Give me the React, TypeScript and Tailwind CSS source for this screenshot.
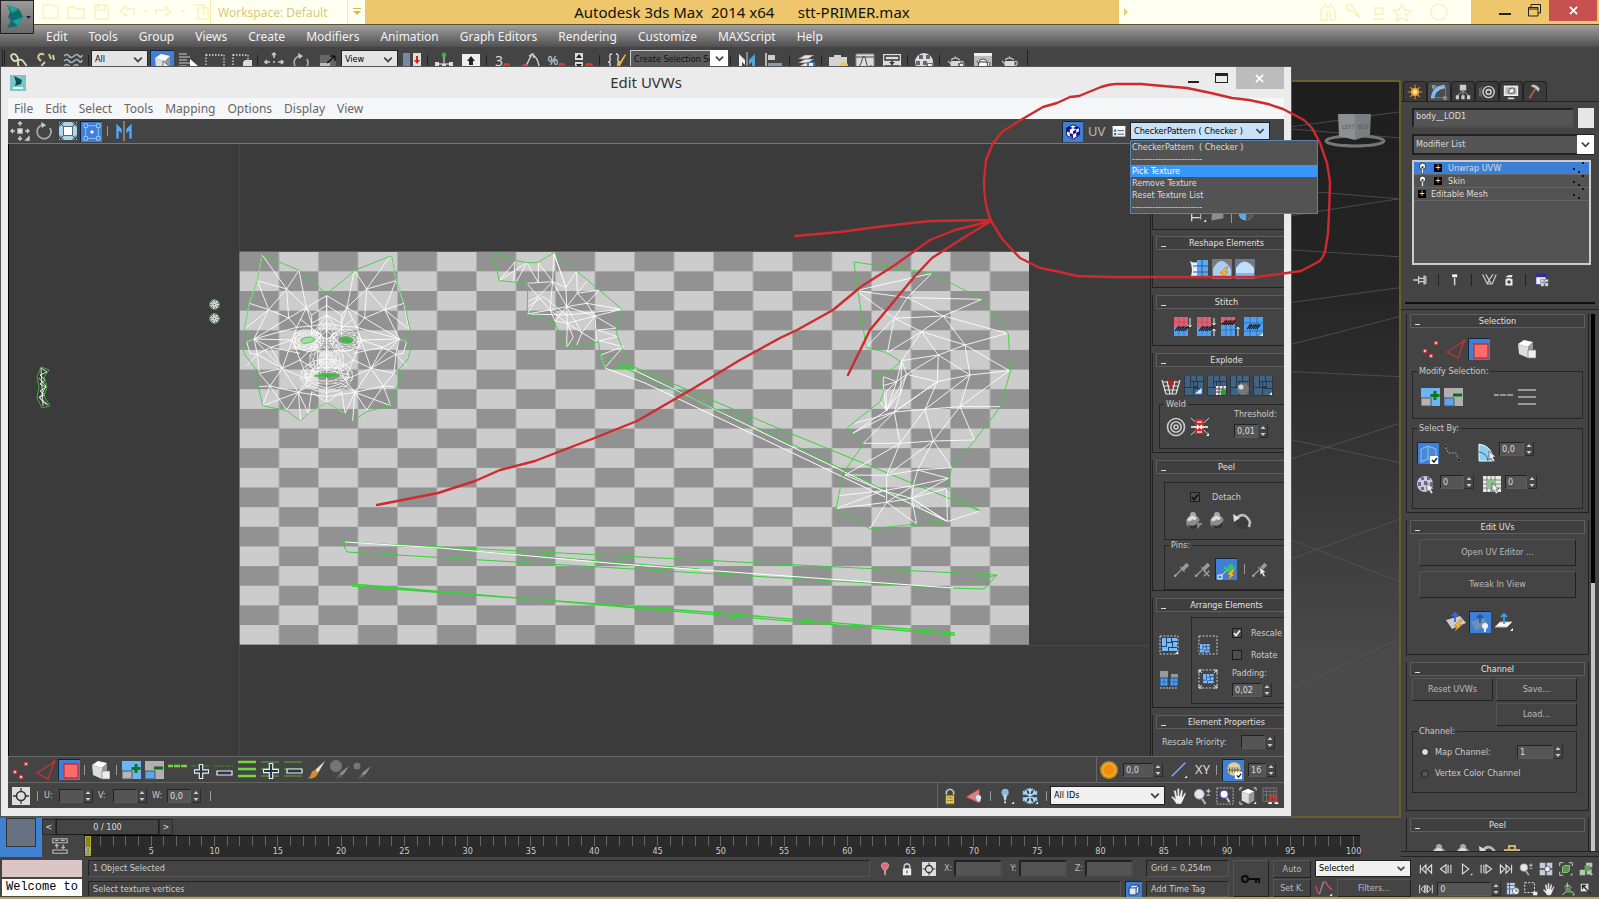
import React from 'react';

const teapot = (
  <g>
    <path d="M5 9h9q2 5-2 8H7q-4-3-2-8z" fill="#d8d8d8" />
    <path d="M5 8q4-4 9 0M9 5h1" stroke="#bbb" fill="none" strokeWidth="1.4" />
    <path d="M5 12L2 9M14 10q4-2 3 2-1 2-3 2" stroke="#bbb" fill="none" strokeWidth="1.3" />
  </g>
);
const tri = <path d="M16 19h3v-3z" fill="#eee" />;
const cursor = <path d="M10 8v9l2-2 2 4 2-1-2-4h3z" fill="#eee" stroke="#333" strokeWidth=".6" />;
const bolt = <path d="M14 8l-6 6h3l-2 5 7-6h-3l3-5z" fill="#ffb92e" stroke="#a06a10" strokeWidth=".5" />;
const maze = (
  <g>
    <path d="M0 0h20v20H0z" fill="#26384a" />
    <path d="M1 0h5v11H1zM7 0h5v5H7zM13 0h6v5h-6zM7 6h2v5H7zM10 6h3v4h-3zM14 6h5v6h-5zM1 12h8v7H1zM10 13h9v6h-9z" fill="#42637f" />
  </g>
);
const blueMaze = (
  <g>
    <path d="M2 3h16v14H2z" fill="#1e4470" />
    <path d="M3 3h4v8H3zM8 3h4v4H8zM13 3h5v3h-5zM8 8h5v4H8zM14 7h4v5h-4zM3 12h6v4H3zM10 13h8v3h-8z" fill="#7dbaf5" />
  </g>
);
const dashBox = <path d="M1 1h18v18H1z" fill="none" stroke="#ccc" strokeDasharray="2 1.5" />;
const pin = <g><path d="M3 17l7-7" stroke="#999" strokeWidth="1.400" /><path d="M8 8l5 5M10 9l5-5 2 2-5 5z" stroke="#999" fill="#999" strokeWidth="1.400" /><circle cx="2.500" cy="17.500" r="1.400" fill="#aaa" /></g>;
const sphere = (
  <g>
    <circle cx="9" cy="11" r="7" fill="#8c8c8c" />
    <circle cx="9" cy="4" r="3" fill="#aaa" />
    <path d="M3 9q4-7 10-2-3 4-4 1-4 4-6 1z" fill="#ddd" />
    <path d="M4 14q7 3 12-5 0 9-7 9-4 0-5-4z" fill="#333" />
  </g>
);
const stitches = <path d="M3 14l3-4h2l-3 4m2 0l3-4h2l-3 4m2 0l3-4h2l-3 4" stroke="#111" fill="none" strokeWidth="1.1" />;
const cubeShape = (
  <g>
    <path d="M2 5l6-4 9 2-5 5z" fill="#fff" />
    <path d="M2 5l10 3v11L3 15z" fill="#ddd" />
    <path d="M12 8l5-5v10l-5 6z" fill="#999" />
  </g>
);

const icons: Record<string, React.ReactNode> = {
  link: <path d="M2 4a3 3 0 015-1l2 3a3 3 0 01-4 3L3 7zM9 9a3 3 0 015 0l3 4a3 3 0 01-5 4l-3-4z" fill="none" stroke="#e3d9b5" strokeWidth="1.8" />,
  unlink: <path d="M8 3a3 3 0 00-5 4l2 2M9 10l-3 3a3 3 0 004 4l4-2M13 2l2 5m2-4l1 5" fill="none" stroke="#d6cc98" strokeWidth="2" />,
  waves: <g fill="none" stroke="#aab4ba" strokeWidth="1.6"><path d="M1 4q3-3 5 0t5 0 5 0 3-1M1 9q3-3 5 0t5 0 5 0 3-1M1 14q3-3 5 0t5 0 4 0" /><path d="M14 15l4 3" stroke="#d6b860" /></g>,
  selectObj: <g>{cubeShape}{cursor}</g>,
  byName: <g><path d="M1 2h8M1 5h11M1 8h8M1 11h11M1 14h8M1 17h10" stroke="#ccc" strokeWidth="1.2" /><path d="M12 7v10l2-2 2 4 1-5h3z" fill="#fff" /></g>,
  rect: <path d="M1 3h18v14H1z" fill="none" stroke="#ddd" strokeDasharray="1.5 1.5" strokeWidth="1.3" />,
  windowSel: <g><path d="M1 3h15v14H1z" fill="none" stroke="#ddd" strokeDasharray="1.5 1.5" strokeWidth="1.3" /><path d="M11 10l2-2h7v8l-2 2h-7z" fill="#ddd" /></g>,
  move: <g fill="none" stroke="#ccc" strokeWidth="1.4"><path d="M10 1v4M8 3l2-2 2 2M10 15v4M8 17l2 2 2-2M1 10h4M3 8l-2 2 2 2M15 10h4M17 8l2 2-2 2" /><path d="M8 8h4v4H8z" fill="#eee" />{tri}</g>,
  moveBig: <g fill="none" stroke="#c8c8c8" strokeWidth="1.6"><path d="M10 1v5M8 3l2-2 2 2M10 14v5M1 10h5M3 8l-2 2 2 2M14 10h5M17 8l2 2-2 2M9 10h2" /></g>,
  rotate: <g fill="none" stroke="#aaa" strokeWidth="1.7"><path d="M8 4a7 7 0 108 3" /><path d="M7 1l5 3-4 3" fill="#ccc" stroke="none" /></g>,
  scaleBig: <g><path d="M2 3h16v15H2z" fill="#666" /><path d="M2 11h10v8H2z" fill="#bbb" /><path d="M9 11l8-7M17 9V4h-5" stroke="#111" strokeWidth="1.4" fill="none" /></g>,
  scaleLight: <g><path d="M0 0h20v20H0z" fill="#a9d7ee" /><path d="M5 5h10v10H5z" fill="#fff" stroke="#555" /><path d="M1 5V1h4M1 1l4 4M15 1h4v4M19 1l-4 4M1 15v4h4M1 19l4-4M19 15v4h-4M19 19l-4-4" stroke="#222" fill="none" strokeWidth="1.1" /></g>,
  freeform: <g><path d="M3 3h14v14H3z" fill="none" stroke="#9cc6ff" /><path d="M1 1h4v4H1zM15 1h4v4h-4zM1 15h4v4H1zM15 15h4v4h-4z" fill="#3f7fd6" stroke="#9cc6ff" /><path d="M10 8v4M8 10h4" stroke="#fff" strokeWidth="1.500" /></g>,
  mirror: <g><path d="M2 2l6 6v5l-3-3v8H2z" fill="#5aa8ec" stroke="#1a4a80" strokeWidth=".6" /><path d="M18 2l-6 6v5l3-3v8h3z" fill="#5aa8ec" stroke="#1a4a80" strokeWidth=".6" /><path d="M10 0v20" stroke="#c9b59a" /></g>,
  mirrorBig: <g><path d="M2 2l6 6v5l-3-3v8H2z" fill="#eee" /><path d="M18 2l-6 6v5l3-3v8h3z" fill="#4aa8e0" /><path d="M10 0v20" stroke="#ccc" /></g>,
  pivot: <g><path d="M1 1h7v18H1z" fill="#7788a0" /><path d="M11 1h8v18h-8z" fill="#ddd" /><path d="M14 4h2v4h2l-3 4-3-4h2z" fill="#c22" /></g>,
  manip: <g><circle cx="10" cy="3" r="2.4" fill="#3fae4a" /><path d="M10 5v9M4 12h12" stroke="#bbb" strokeWidth="1.4" /><path d="M1 10h4v4H1zM15 10h4v4h-4zM8 12h4v4H8z" fill="#ddd" /></g>,
  keyboard: <g><path d="M1 2h18v14H1z" fill="#eee" /><path d="M10 4l4 5h-2v4H8V9H6z" fill="#222" /></g>,
  snapAngle: <g fill="none" strokeWidth="1.5"><path d="M4 18L12 2q6 4 7 12M9 4l4-2 1 4" stroke="#ccc" /><circle cx="5" cy="16" r="3" stroke="#e23b3b" strokeWidth="2" /></g>,
  spinSnap: <g><path d="M1 1h8v7H1zM1 10h8v7H1z" fill="#ddd" /><path d="M5 2l3 4H2zM5 16l3-4H2z" fill="#222" /><circle cx="15" cy="15" r="3" fill="none" stroke="#e23b3b" strokeWidth="2" /></g>,
  sets: <g><path d="M6 2q-3 0-2 4t-2 4q3 0 2 4t2 4M10 2q3 0 2 4t2 4q-3 0-2 4t-2 4" fill="none" stroke="#ddd" strokeWidth="1.3" /><path d="M19 2l-7 11-1 3 3-2 6-11z" fill="#f0b429" /></g>,
  align: <g><path d="M2 1v18" stroke="#ddd" strokeWidth="1.5" /><path d="M4 3h7v5H4z" fill="#ccc" /><path d="M4 11h14v5H4z" fill="#89a" /></g>,
  layers: <g><path d="M2 7l7-4h9l-6 4zM2 11l7-4h9l-6 4zM2 15l7-4h9l-6 4z" fill="#e4e4e4" stroke="#555" strokeWidth=".5" /><path d="M11 10h8v9h-8z" fill="#4a77a8" /><path d="M13 11h4v4h-4z" fill="#eee" /></g>,
  ribbon: <g><path d="M1 5h5V3h7v2h6v11H1z" fill="#d4d4d4" /><circle cx="16" cy="14" r="4" fill="#f4c65c" /></g>,
  curveEd: <g><path d="M1 2h18v16H1z" fill="#ddd" stroke="#888" /><path d="M1 16q4 0 6-8t4 1 3 6 4 0M1 5h18" fill="none" stroke="#444" /></g>,
  schematic: <g><path d="M1 2h18v16H1z" fill="#ddd" /><path d="M3 4h14v4H3zM3 14h14v4H3zM10 8v5" fill="none" stroke="#333" strokeWidth="1.4" /><path d="M7 10h6l-3 3z" fill="#333" /></g>,
  material: <g><circle cx="10" cy="10" r="9" fill="#ddd" /><path d="M5 3h4v4H5zM12 3h4v4h-4zM2 9h4v4H2zM9 9h4v4H9z" fill="#667" /><path d="M12 11h8v8h-8z" fill="#4a77a8" /><path d="M14 12h4v4h-4z" fill="#eee" /></g>,
  renderSetup: <g>{teapot}<path d="M12 11h7v8h-7z" fill="#4a77a8" /><path d="M14 12h3v4h-3z" fill="#eee" /></g>,
  renderFrame: <g><path d="M1 1h18v17H1z" fill="#bbb" /><path d="M1 1h18v3H1z" fill="#eee" /><path d="M6 10h8q2 4-2 7H8q-4-3-2-7zM6 9q4-4 8 0M4 9l2 3M14 11q3-2 3 1l-2 3" fill="#fff" stroke="#444" /></g>,
  render: teapot,
  checker: <g><path d="M2 5l8-4 8 4v9l-8 5-8-5z" fill="#fff" /><path d="M2 5l4-2 4 2-4 2zM10 5l4-2 4 2-4 2zM2 5v4l4 2V7zM6 11v4l4 3v-5zM10 9l4-2v4l-4 2zM14 11l4-2v4l-4 3z" fill="#14149a" /><path d="M2 5l8-4 8 4v9l-8 5-8-5z" fill="none" stroke="#0c0c60" strokeWidth="1.200" /></g>,
  list: <g><path d="M1 3h18v15H1z" fill="#f1f5f8" /><path d="M1 3h18v3H1z" fill="#fff" /><path d="M3 8h3v3H3zM3 13h3v3H3z" fill="#2d6fb0" /><path d="M8 9.500h9M8 14.500h9" stroke="#556" strokeWidth="1.4" /></g>,
  verts: <g fill="#fff" stroke="#e23b3b" strokeWidth="1.4"><circle cx="3" cy="12" r="1.600" /><circle cx="9" cy="17" r="1.600" /><circle cx="14" cy="4" r="1.600" /></g>,
  edges: <g fill="none" stroke="#c23434" strokeWidth="1.3"><path d="M1 13L18 2 12 19z" /><circle cx="18" cy="2" r="1" /></g>,
  face: <path d="M4 4h14v14H4z" fill="#ff6a6a" stroke="#c73030" strokeWidth="1.3" />,
  element: <g>{cubeShape}<path d="M12 11h8v8h-8z" fill="#eee" stroke="#777" strokeWidth=".7" /></g>,
  grow: <g><path d="M0 1h19v18H0z" fill="#6db4f4" /><path d="M0 11h10v8H0z" fill="#b5b5b5" stroke="#555" /><path d="M14 4v9M9.500 8.500h9" stroke="#0c7a1c" strokeWidth="3" /></g>,
  shrink: <g><path d="M0 1h19v18H0z" fill="#b0b0b0" /><path d="M0 11h10v8H0z" fill="#58a6f0" stroke="#555" /><path d="M9 8h9" stroke="#0c6a1c" strokeWidth="3" /></g>,
  loopG: <path d="M0 6h5m1 0h6m1 0h6" stroke="#6fd93f" strokeWidth="2.4" />,
  loopPlus: <g><path d="M0 6h19" stroke="#43653a" strokeWidth="2" strokeDasharray="5 1" /><path d="M10 4v15M3 11.500h15" stroke="#eee" strokeWidth="4.500" /><path d="M10 5v13M4 11.500h13" stroke="#26374c" strokeWidth="2.200" /></g>,
  loopMinus: <g><path d="M0 6h19" stroke="#43653a" strokeWidth="2" strokeDasharray="5 1" /><path d="M3 11h15v4H3z" fill="#26374c" stroke="#eee" strokeWidth="1.200" /></g>,
  ringG: <path d="M1 2h18M1 9h18M1 16h18" stroke="#6fd93f" strokeWidth="2.600" />,
  ringPlus: <g><path d="M1 2h18M1 9h18M1 16h18" stroke="#4b7a3c" strokeWidth="2" /><path d="M11 3v16M3 11h16" stroke="#eee" strokeWidth="4.500" /><path d="M11 4v14M4 11h14" stroke="#26374c" strokeWidth="2.200" /></g>,
  ringMinus: <g><path d="M1 2h18M1 9h18M1 16h18" stroke="#4b7a3c" strokeWidth="2" /><path d="M4 9h15v4H4z" fill="#26374c" stroke="#eee" strokeWidth="1.200" /></g>,
  loopGray: <path d="M0 8h5m1 0h6m1 0h6" stroke="#999" strokeWidth="2" />,
  ringGray: <path d="M1 3h18M1 10h18M1 17h18" stroke="#999" strokeWidth="2.200" />,
  brush: <g><path d="M19 1L9 10l3 3z" fill="#e6dcc8" /><path d="M10 10q-4 0-5 4t-4 4q9 2 11-5z" fill="#d98a2b" /></g>,
  brushPlus: <g><circle cx="7" cy="6" r="6" fill="#757575" /><path d="M20 6l-8 6-4 6 7-4z" fill="#8c8c8c" /><path d="M10 14l-3 5 7-3" fill="#606060" /></g>,
  brushMinus: <g><circle cx="5" cy="6" r="3.500" fill="#757575" /><path d="M19 6l-8 6-4 6 7-4z" fill="#8c8c8c" /><path d="M9 14l-3 5 7-3" fill="#606060" /></g>,
  soft: <g><circle cx="10" cy="10" r="9" fill="#b98a35" /><circle cx="10" cy="10" r="7.500" fill="#efa51f" /><circle cx="10" cy="10" r="5" fill="#f58a09" /></g>,
  line: <g><path d="M2 17L17 2" stroke="#7fa8ef" strokeWidth="1.800" />{tri}</g>,
  limit: <g><circle cx="10" cy="9" r="7.500" fill="#e2cf95" /><path d="M2 10h16M5 7v6M8 7v6M11 7v6M14 7v6" stroke="#555" /><path d="M11 12h8v8h-8z" fill="#fff" /><path d="M13 16l2 2 3-4" fill="none" stroke="#222" strokeWidth="1.400" /></g>,
  absolute: <g><path d="M0 0h20v20H0z" fill="#ddd" /><path d="M10 1v18M1 10h18" stroke="#333" strokeWidth="1.400" /><circle cx="10" cy="10" r="5" fill="#ddd" stroke="#333" strokeWidth="1.800" /></g>,
  lock: <g><path d="M6 9V5q4-5 8 0v4" fill="none" stroke="#c9c9b8" strokeWidth="1.800" /><path d="M5 9h10v10H5z" fill="#d8c65c" stroke="#5e5520" /><path d="M7 12h6M7 15h6" stroke="#8f7f30" /></g>,
  filter: <g><path d="M1 11L16 2v16z" fill="#d98080" stroke="#a04040" /><path d="M12 12q0-3 3-3t3 3l-1 4h-3z" fill="#cfeaf5" /></g>,
  bulb: <g><circle cx="9" cy="6" r="4" fill="#8fb7dd" /><path d="M7 9h4l-1 6H8z" fill="#c3d6e6" /><path d="M8 17h2" stroke="#eee" strokeWidth="2" />{tri}</g>,
  snow: <g><path d="M10 1v18M2 5l16 10M2 15L18 5M7 2l3 3 3-3M7 18l3-3 3 3M2 8l4-1-1-4M18 12l-4 1 1 4M2 12l4 1-1 4M18 8l-4-1 1-4" stroke="#a4dcff" strokeWidth="1.800" fill="none" />{tri}</g>,
  hand: <path d="M7 19q-2-4-6-8 2-2 5 2L4 4q2-1 3 1l1 5V2q2-1 2.500 0V10l2-7q2 0 2 1l-1 7 3-5q2 0 1 2l-3 7-2 4z" fill="#eee" stroke="#444" strokeWidth=".5" />,
  zoom: <g><circle cx="7" cy="8" r="5.500" fill="#dfeaf0" stroke="#999" /><path d="M10 13l4 6" stroke="#b9a985" strokeWidth="2.600" /><path d="M17 2v5M14.500 4.500h5M15 9h4" stroke="#eee" /></g>,
  zoomRegion: <g>{dashBox}<circle cx="9" cy="8" r="4.500" fill="#fff" stroke="#5b4bb5" strokeWidth="1.400" /><path d="M12 12l3 5" stroke="#ccc" strokeWidth="2.200" /></g>,
  zoomExt: <g><path d="M3 5l7-3 7 3-6 3z" fill="#fff" /><path d="M3 5l8 3v11l-8-4z" fill="#ddd" /><path d="M11 8l6-3v10l-6 4z" fill="#999" /><path d="M1 4V1h3M16 1h3v3M1 16v3h3" fill="none" stroke="#eee" />{tri}</g>,
  magnet: <g><path d="M1 1h15v15H1zM1 5h15M1 9h15M5 1v15M9 1v15M13 1v15" stroke="#777" fill="none" /><path d="M9 17v-4q3-6 7 0v4" stroke="#d93030" strokeWidth="3" fill="none" /><path d="M7 18h4M14 18h4" stroke="#fff" strokeWidth="2" /></g>,
  straighten: <g><path d="M1 2q5 3 9 0v17q-4-3-9 0 4-8 0-17z" fill="#e6eff5" /><path d="M8 1h11v18H8z" fill="#5fa8f0" /><path d="M4 7h15M4 13h15M13 1v18" stroke="#2260a0" /></g>,
  relaxBolt: <g><path d="M0 0h20v20H0z" fill="#7a7a7a" /><path d="M1 19V10q8-16 18 0v9z" fill="#a9cdf0" />{bolt}</g>,
  relax: <g><path d="M0 0h20v20H0z" fill="#6d7a88" /><path d="M1 19V9q8-13 18 0v10z" fill="#bfe0fa" /><path d="M1 14h18v5H1z" fill="#7db8f0" /></g>,
  stitchA: <g><path d="M2 0h14v10H2z" fill="#e06070" /><path d="M2 10h14v9H2z" fill="#4f9fee" /><path d="M2 5h14M7 0v19M12 0v19" stroke="#9a4a58" strokeWidth=".6" />{stitches}<path d="M18 1v9M16.500 8l1.500 2 1.500-2" stroke="#eee" fill="none" /></g>,
  stitchB: <g><path d="M1 0h14v10H1z" fill="#e06070" /><path d="M1 10h14v9H1z" fill="#4f9fee" /><path d="M1 5h14M6 0v19M11 0v19" stroke="#7a5a78" strokeWidth=".6" />{stitches}<path d="M18 1v7m0 4v7M16.500 6l1.500 2 1.500-2M16.500 14l1.500-2 1.500 2" stroke="#eee" fill="none" /></g>,
  stitchC: <g><path d="M1 0h14v6H1z" fill="#e06070" /><path d="M1 7h14v12H1z" fill="#4f9fee" /><path d="M1 13h14M6 0v19M11 0v19" stroke="#2a5f9a" strokeWidth=".6" /><g transform="translate(-1 -6)">{stitches}</g><path d="M18 10v9M16.500 12l1.500-2 1.500 2" stroke="#eee" fill="none" /></g>,
  stitchD: <g><path d="M0 0h19v19H0z" fill="#4f9fee" /><path d="M0 6h19M0 14h19M6 0v19M13 0v19" stroke="#2a5f9a" strokeWidth=".7" /><g transform="translate(0 -2)">{stitches}</g>{tri}</g>,
  breakI: <g fill="none" stroke="#ddd"><path d="M1 6h7M12 6h7M2 10h7M11 10h7M3 14h14M5 18h10M1 4l4 14M19 4l-4 14M6 5l3 13M14 5l-3 13" strokeWidth="1.200" /><path d="M6 3l4 10 4-10-4 2z" fill="#b02020" stroke="none" /></g>,
  flatA: <g>{maze}<path d="M10 18l8-7v7z" fill="#e8f2ff" stroke="#3070c0" /></g>,
  flatB: <g>{maze}<path d="M9 10h10v9H9z" fill="#eee" /><path d="M9 13h10M9 16h10M12 10v9M16 10v9" stroke="#444" /><path d="M14 14h5v5h-5z" fill="#2f9a3a" /></g>,
  flatC: <g>{maze}<circle cx="13" cy="13" r="6" fill="#777" /><circle cx="11" cy="11" r="2.500" fill="#ddd" /></g>,
  flatD: <g>{maze}{tri}</g>,
  target: <g fill="none" stroke="#ccc" strokeWidth="1.600"><circle cx="10" cy="10" r="8.500" /><circle cx="10" cy="10" r="5.200" /><circle cx="10" cy="10" r="2" /></g>,
  weld: <g><path d="M1 1l18 17M19 1L1 18" stroke="#ccc" /><path d="M5 2h9v15H5z" fill="#c92a2a" /><path d="M1 10h7M18 10h-7M7 8l2 2-2 2M12 8l-2 2 2 2" stroke="#fff" fill="none" strokeWidth="1.400" /><path d="M7 4h5v2H7zM7 14h5v2H7z" fill="#eaa" />{tri}</g>,
  peel: <g>{sphere}<path d="M13 12h6l-6 6z" fill="#888" /></g>,
  peelMode: sphere,
  reset: <g><circle cx="11" cy="11" r="7.500" fill="#3b3b3b" /><path d="M4 8q8-9 14 3l-1 5" fill="none" stroke="#bbb" strokeWidth="2.600" /><path d="M1 3l1 8 6-4z" fill="#ddd" /></g>,
  pin,
  unpin: <g>{pin}<path d="M11 12l6 6M17 12l-6 6" stroke="#999" strokeWidth="1.800" /></g>,
  autoPin: <g><path d="M4 16l6-6" stroke="#ddd" /><path d="M7 7l6 6M10 9l4-4 3 3-4 4z" stroke="#3fc06a" fill="#3fc06a" strokeWidth="2" /><path d="M1 15h4v4H1z" fill="none" stroke="#fff" /><g transform="translate(2 1)">{bolt}</g></g>,
  pinSel: <g>{pin}{cursor}</g>,
  packA: <g>{dashBox}{blueMaze}{tri}</g>,
  packB: <g><path d="M1 2h8v7H1zM12 5h7v4h-7z" fill="#999" /><path d="M1 9h8v8H1zM11 9h8v8h-8z" fill="#4f9fee" stroke="#1e4a80" /><path d="M1 13h8M11 13h8M5 9v8M15 9v8" stroke="#2f6db0" /><path d="M1 19h18" stroke="#ccc" strokeDasharray="2 1" /></g>,
  packC: <g>{dashBox}<g transform="translate(0 7) scale(.65)">{blueMaze}</g></g>,
  packD: <g>{dashBox}<g transform="translate(3 3) scale(.7)">{blueMaze}</g><path d="M1 4V1h3M19 4V1h-3M1 16v3h3M19 16v3h-3M1 1l3 3M19 1l-3 3M1 19l3-3M19 19l-3-3" stroke="#ddd" fill="none" /></g>,
  relaxH: <g><path d="M3 2v16M3 7h14M3 14h9" stroke="#ddd" strokeWidth="1.400" /><path d="M13 10v6M6 5L3 7l3 2M14 5l3 2-3 2" stroke="#ddd" fill="none" /><path d="M2 1h3v3H2z" fill="#d05050" />{tri}</g>,
  flip: <path d="M4 4l14-2v12L3 17z" fill="#8e8e8e" />,
  half: <g><circle cx="10" cy="9" r="8" fill="#fff" /><path d="M10 1a8 8 0 000 16z" fill="#5aa8ec" /><path d="M10 9l8 0a8 8 0 01-8 8z" fill="#555" /></g>,
  sun: <g><path d="M10 1v18M1 10h18M4 4l12 12M16 4L4 16" stroke="#e8912a" strokeWidth="1.300" /><circle cx="10" cy="10" r="5" fill="#f7a838" /><circle cx="10" cy="10" r="2.500" fill="#ffe9b0" /></g>,
  modify: <g><path d="M2 18Q3 5 17 3" fill="none" stroke="#7ec4ff" strokeWidth="4.500" /><path d="M2 2h3v3H2zM16 16h3v3h-3z" fill="none" stroke="#ccc" /><path d="M3 5v12h13M6 3h12v12" fill="none" stroke="#999" strokeWidth=".8" /></g>,
  hierarchy: <g fill="#ccc"><path d="M6 1h8v7H6zM1 14h4v5H1zM8 14h4v5H8zM15 14h4v5h-4z" /><path d="M10 8v6M3 14l7-5 7 5" stroke="#aaa" fill="none" /></g>,
  motion: <g fill="none" stroke="#ccc"><circle cx="12" cy="10" r="7" strokeWidth="1.800" /><circle cx="12" cy="10" r="3" strokeWidth="2" /><path d="M4 3q-4 7 0 14M1 5q-2 5 0 10" strokeWidth="1" stroke="#888" /></g>,
  display: <g><path d="M1 2h18v13H1z" fill="#eee" /><path d="M3 4h14v9H3z" fill="#bbb" /><path d="M8 6l4-1 2 1v5l-5 1-2-1z" fill="#eee" stroke="#333" /><path d="M6 17h8v2H6z" fill="#ddd" /></g>,
  hammer: <g><path d="M11 5L3 18" stroke="#9c5d4d" strokeWidth="2.600" /><path d="M6 1q6-1 10 5l-2 4q-3-6-9-7z" fill="#c4c4c4" /></g>,
  pushpin: <path d="M0 10h7M7 5v10M7 8h7v4H7M14 4v12M16 5v10" stroke="#ccc" fill="none" strokeWidth="1.600" />,
  tube: <g><path d="M6 2h7v4H6z" fill="#fff" /><path d="M8 6h3v12H8z" fill="#ddd" stroke="#111" strokeWidth=".6" /></g>,
  unique: <path d="M2 3l6 12 6 0 5-12M6 3l4 7 5-7M8 15l2-5 3 5" fill="none" stroke="#ccc" strokeWidth="1.500" />,
  trash: <g><path d="M5 9q5-3 10 0v9H5z" fill="#eee" /><path d="M5 6q3-4 10-3l-1 3z" fill="#eee" /><circle cx="10" cy="13" r="2.500" fill="#444" /></g>,
  config: <g><path d="M1 2h15v15H1z" fill="#f2f2f2" stroke="#2c2c9c" strokeWidth="1.600" /><path d="M1 2h15v4H1z" fill="#2c2c9c" /><path d="M8 9h5v4H8zM14 14h5v5h-5zM8 14h5v5H8zM14 9h5v4h-5z" fill="#ddd" stroke="#444" strokeWidth=".6" /></g>,
  ignore: <g><path d="M2 5l7-3v13l-7 3zM9 2l8 3v12l-8-2" fill="#4a8ad0" stroke="#8fc0f4" /><path d="M11 12h8v8h-8z" fill="#fff" /><path d="M13 16l2 2 3-4" fill="none" stroke="#222" strokeWidth="1.500" /></g>,
  pointEdge: <g fill="none"><path d="M3 4l3 6h8l3 6" stroke="#888" strokeWidth="1.600" strokeDasharray="2 1.500" /><path d="M1 1h3v3H1zM16 16h3v3h-3z" fill="#111" stroke="#999" strokeWidth=".5" /></g>,
  angle: <g><path d="M2 1q14 2 14 17H2z" fill="#8fcdf0" stroke="#dff" /><path d="M2 9q8 1 9 9" stroke="#35638c" fill="none" /><g transform="translate(2 0)">{cursor}</g></g>,
  matSel: <g><circle cx="8" cy="9" r="8" fill="#c9c9dd" /><path d="M4 2h3v3H4zM10 2h3v3h-3zM7 6h3v4H7zM1 7h3v4H1zM13 7h3v4h-3zM4 12h3v3H4z" fill="#6a6a86" />{cursor}</g>,
  gridSel: <g><path d="M1 1h18v16H1z" fill="#e4ecdc" /><path d="M1 5h18M1 9h18M1 13h18M5 1v16M9 1v16M13 1v16" stroke="#667" strokeWidth=".8" /><path d="M5 5h8v8H5z" fill="#8cc08c" />{cursor}</g>,
  mapBolt: <g><path d="M0 8l14-4 6 7-14 6z" fill="#ccc" /><path d="M9 10V1M6 4l3-3 3 3" stroke="#3b68d8" strokeWidth="1.800" fill="none" />{bolt}</g>,
  mapBulb: <g><path d="M1 9l13-4 4 7-12 5z" fill="#6f90b5" /><path d="M10 10V2M7 5l3-3 3 3" stroke="#2a5596" strokeWidth="1.800" fill="none" /><circle cx="15" cy="13" r="3" fill="#eef" /><path d="M14 15h2v4h-2z" fill="#eef" /></g>,
  mapFlat: <g><path d="M1 15l5-5h12l-5 5z" fill="#fff" stroke="#bbb" /><path d="M10 12V2M7 5l3-3 3 3" stroke="#3fa0dc" strokeWidth="1.800" fill="none" />{tri}</g>,
  goldBox: <g><path d="M2 6h16v12H2z" fill="#c9b26a" /><path d="M7 3h6v4H7z" fill="none" stroke="#c9b26a" strokeWidth="2" /><path d="M9 9h3v4H9z" fill="#444" /></g>,
  probe: <path d="M10 1q6 0 5 5-1 4-4 6l-1 7-1-7Q6 10 5 6q-1-5 5-5z" fill="#e06a78" stroke="#eee" strokeWidth=".7" />,
  lockW: <g><path d="M6 9V5q4-5 8 0v4" fill="none" stroke="#ddd" strokeWidth="1.800" /><path d="M4 9h12v10H4z" fill="#eee" /><path d="M10 12v4" stroke="#444" strokeWidth="1.500" /></g>,
  isoCube: <path d="M3 7l4-4h10v10l-4 4H3zM3 7h10v10M13 7l4-4" fill="#dcebff" stroke="#1c3c68" strokeWidth="1.400" />,
  first: <path d="M2 4v12M10 4l-6 6 6 6zM18 4l-6 6 6 6z" fill="none" stroke="#ddd" strokeWidth="1.600" />,
  prev: <path d="M10 4l-8 6 8 6zM13 4v12M17 4v12" fill="none" stroke="#ddd" strokeWidth="1.600" />,
  play: <g><path d="M5 3l9 7-9 7z" fill="none" stroke="#ddd" strokeWidth="1.600" />{tri}</g>,
  next: <path d="M10 4l8 6-8 6zM7 4v12M3 4v12" fill="none" stroke="#ddd" strokeWidth="1.600" />,
  last: <path d="M18 4v12M10 4l6 6-6 6zM2 4l6 6-6 6z" fill="none" stroke="#ddd" strokeWidth="1.600" />,
  keyMode: <path d="M1 4v12M8 5l-5 5 5 5zM10 4v12M12 5l5 5-5 5zM19 4v12" fill="none" stroke="#ddd" strokeWidth="1.400" />,
  zoomAll: <g><path d="M1 1h8v8H1zM11 1h8v8h-8zM1 11h8v8H1zM11 11h8v8h-8z" fill="#c7cdd4" /><circle cx="12" cy="10" r="4" fill="#eef" stroke="#345" /></g>,
  extents: <g><path d="M1 6V1h5M14 1h5v5M1 14v5h5" stroke="#ccc" fill="none" strokeWidth="1.400" /><path d="M5 7l3-2h7v7l-3 3H5z" fill="#4d9a4a" stroke="#b8e0a8" />{tri}</g>,
  extentsAll: <g><path d="M10 1h9v7h-9zM1 11h8v8H1zM11 10h7v8h-7z" fill="#bbc4bb" /><path d="M8 5h8v8H8z" fill="#5aa850" />{tri}</g>,
  timeCfg: <g><path d="M1 1h12v17H1z" fill="#cfe0f2" stroke="#446" /><path d="M1 5h12M5 1v17M1 10h12" stroke="#3b6ea8" strokeWidth="1.600" /><circle cx="14" cy="13" r="5" fill="#eee" stroke="#444" /><path d="M14 10v3h3" stroke="#333" fill="none" /></g>,
  region: <g><path d="M1 1h14v14H1z" fill="none" stroke="#ddd" strokeDasharray="3 2" strokeWidth="1.400" /><path d="M13 14h6v5h-6z" fill="#eee" /></g>,
  orbit: <g><path d="M9 1v12l-7 5M9 13l9 2M5 7q5-5 10 1" stroke="#ccc" fill="none" strokeWidth="1.400" /><circle cx="10" cy="11" r="4" fill="#55a04a" />{tri}</g>,
  maximize: <g><path d="M2 2h12v12H2z" fill="#ddd" stroke="#444" /><path d="M5 5l12 12M5 10V5h5" stroke="#222" fill="none" strokeWidth="1.800" /></g>,
  key: <g><circle cx="4" cy="10" r="3" fill="none" stroke="#0a0a0a" strokeWidth="2" /><path d="M7 10h12M15 10v4M18 10v4" stroke="#0a0a0a" strokeWidth="2" fill="none" /></g>,
  tangent: <g><path d="M1 8q3 14 6 3T12 4t7 8" fill="none" stroke="#d05050" strokeWidth="1.500" /><path d="M5 17l4-14" stroke="#7a90c8" />{tri}</g>,
  trackToggle: <path d="M1 1h18v5H1zM1 15h18v4H1zM4 3h4m3 0h5M6 8v5M4 10l2-2 2 2M14 8v5M12 11l2 2 2-2" fill="none" stroke="#bbb" strokeWidth="1.400" />,
};

const sizes = { 14: 'size-[14px]', 16: 'size-4', 18: 'size-[18px]', 20: 'size-5' };

function Ic({ n, s = 20 }: { n: string; s?: keyof typeof sizes }) {
  return <svg viewBox="0 0 20 20" className={`${sizes[s]} shrink-0`} aria-hidden="true">{icons[n]}</svg>;
}

function Tool({ n, s = 20, on, className = '' }: { n: string; s?: keyof typeof sizes; on?: boolean; className?: string }) {
  return (
    <button
      aria-label={n}
      className={`flex items-center justify-center shrink-0 ${on ? 'bg-[#3f7fd6] border-t border-l border-[#15243c]' : ''} ${className || 'w-6 h-[22px]'}`}
    >
      <Ic n={n} s={s} />
    </button>
  );
}

const Sep = ({ className = 'w-2' }: { className?: string }) => (
  <span className={`flex justify-center shrink-0 ${className}`}><span className="w-px h-[10px] bg-[#999]" /></span>
);

const Bar = () => <span className="w-px h-3 mx-[4px] bg-[#222]" />;

function Spin({ label, value = '', w = 'w-6' }: { label: string; value?: string; w?: string }) {
  return (
    <span className="flex items-center shrink-0">
      <input aria-label={label} defaultValue={value} className={`${w} h-[14px] px-[2px] bg-[#555] border border-[#222] border-r-[#5c5c5c] border-b-[#5c5c5c] text-[#ddd]`} />
      <svg viewBox="0 0 10 14" className="w-[10px] h-[14px]" aria-hidden="true">
        <path d="M9.500 0v13.500H1" fill="none" stroke="#2b2b2b" />
        <path d="M5 2l2.500 3h-5zM5 12l2.500-3h-5z" fill="#ccc" />
      </svg>
    </span>
  );
}

function Check({ on, mark = '#eee' }: { on?: boolean; mark?: string }) {
  return (
    <span className="grid shrink-0">
      <input type="checkbox" defaultChecked={on} className="col-start-1 row-start-1 appearance-none size-[10px] border border-[#1c1c1c] bg-[#4e4e4e]" />
      {on && <svg viewBox="0 0 10 10" className="col-start-1 row-start-1 size-[10px] pointer-events-none"><path d="M2 5l2 2.500L8 2.500" fill="none" stroke={mark} strokeWidth="1.800" /></svg>}
    </span>
  );
}

function Select({ label, options, className, h = 'h-[17px]' }: { label: string; options: string[]; className: string; h?: string }) {
  return (
    <span className={`relative flex shrink-0 ${className}`}>
      <select aria-label={label} className={`appearance-none w-full pl-[3px] ${h} bg-transparent outline-none`}>
        {options.map((o) => <option key={o}>{o}</option>)}
      </select>
      <svg viewBox="0 0 18 18" className="absolute right-0 top-0 h-full w-[18px] pointer-events-none" aria-hidden="true">
        <path d="M5 7l4 4 4-4" fill="none" stroke="#444" strokeWidth="2" />
      </svg>
    </span>
  );
}

function Rollout({ title, body, children }: { title: string; body: string; children?: React.ReactNode }) {
  return (
    <section className="pt-[7px] mb-[7px] shrink-0">
      <div className="border border-t-0 border-[#222] px-[3px]">
        <h3 className="relative -mt-[7px] h-[14px] flex items-center justify-center border border-[#5e5e5e] bg-[#3f3f3f] text-[#e2e2e2]">
          <span className="absolute left-1 bottom-[2px] w-[5px] h-px bg-[#ddd]" />
          {title}
        </h3>
        <div className={body}>{children}</div>
      </div>
    </section>
  );
}

function Group({ title, className, children }: { title: string; className: string; children: React.ReactNode }) {
  return (
    <fieldset className={`border border-[#262626] min-w-0 ${className}`}>
      <legend className="ml-1 px-[2px] leading-[10px]">{title}</legend>
      {children}
    </fieldset>
  );
}

const mainMenu = ['Edit', 'Tools', 'Group', 'Views', 'Create', 'Modifiers', 'Animation', 'Graph Editors', 'Rendering', 'Customize', 'MAXScript', 'Help'];
const uvMenu = ['File', 'Edit', 'Select', 'Tools', 'Mapping', 'Options', 'Display', 'View'];
const textures = ['CheckerPattern  ( Checker )', '------------------------', 'Pick Texture', 'Remove Texture', 'Reset Texture List', '------------------------'];

/* ---------- UV mesh drawing ---------- */

function fan(cx: number, cy: number, rx: number, ry: number, k: number, n: number) {
  let d = '';
  for (let i = 0; i < n; i++) {
    const a = (i / n) * Math.PI * 2;
    const b = ((i + 1) / n) * Math.PI * 2;
    const m = (a + b) / 2;
    const p = (t: number, s: number) => `${(cx + Math.cos(t) * rx * s).toFixed(1)} ${(cy + Math.sin(t) * ry * s).toFixed(1)}`;
    d += `M${p(a, 1)}L${p(b, 1)}M${p(a, 1)}L${p(m, k)}L${p(b, 1)}M${p(m, k)}L${p(m + (b - a), k)}`;
  }
  return d;
}

const halfFace =
  'M96 44L170 147 82 122 116 209 170 147 207 91 229 203 170 147 176 234 116 209 58 190M96 44L82 122 58 190 43 268 116 209 72 297 176 234 229 203 290 167V488' +
  'M176 234L200 262 229 203 245 250 290 225M72 297L200 262 187 300 72 297 122 322 187 300M50 305L72 297 82 343 122 322 157 385 82 343 50 378M50 305L60 340 82 343 88 400 157 385 120 438 88 400' +
  'M120 438L98 497M120 438L170 510 205 457 120 438 88 440M157 385L205 457 212 543M205 457L235 520 290 488M205 457L98 497M187 300L157 385 210 360 187 300M157 385L235 420 205 457 290 470' +
  'M200 262L245 258 290 250M210 360L235 420 250 385 210 360 235 335 187 320M205 457L245 430 290 445M235 420L250 405M157 385L72 297M122 322L210 340M235 520L245 455 290 488' +
  'M229 203L245 225 290 196M245 225V285L290 225M212 238L290 300M250 385L290 350 262 330 235 335 262 300 290 330M262 300L290 270M262 330V385L290 365';

function UvCanvas() {
  const faceCentre = fan(233, 300, 25, 13, 1.6, 12) + fan(347, 300, 25, 13, 1.6, 12) + fan(290, 360, 24, 26, 0.6, 10) + fan(290, 360, 40, 40, 1.3, 12)
    + fan(290, 407, 42, 16, 1.6, 14) + fan(290, 407, 66, 42, 1.2, 14) + fan(290, 280, 30, 26, 0.6, 10) + fan(233, 300, 48, 32, 0.8, 10) + fan(347, 300, 48, 32, 0.8, 10);
  return (
    <svg viewBox="9 144 1141 612" className="w-full h-full" fill="none" aria-label="UV layout">
      <defs>
        <pattern id="chk" x="239.500" y="251.700" width="79" height="39.300" patternUnits="userSpaceOnUse">
          <rect width="79" height="39.300" fill="#ccc" />
          <rect width="39.500" height="19.650" fill="#929292" />
          <rect x="39.500" y="19.650" width="39.500" height="19.650" fill="#929292" />
        </pattern>
      </defs>
      <path d="M239.500 144V252M1029 645.500H1150M239.500 645V756" stroke="#484848" />
      <rect x="239.500" y="251.700" width="789.500" height="393" fill="url(#chk)" />

      <g transform="translate(230 240) scale(.3333)" strokeWidth="2.600">
        <g stroke="#fff">
          <path d={halfFace} />
          <path d={halfFace} transform="translate(580) scale(-1 1)" />
          <path d={faceCentre} strokeWidth="1.800" />
          <path d="M808 122L855 65 850 128M890 68L808 122M890 68L925 128V68L968 125 972 40 1008 142 1040 93 1042 160 1072 122M890 68L860 125M890 130L968 125 925 170 890 130M893 185L925 170 960 210 892 222 925 170M968 125L960 210 1010 200 968 125 1008 142 1010 200 1042 160 1108 150M972 40L1008 142M1010 200L1070 190 1042 160M1070 190L1108 150M1070 190L1176 208 1095 228 1010 200 1012 250 960 210 975 243 1012 250 1095 228 1070 190M1012 250L1010 322 1030 292 1012 250 1056 278 1095 228 1100 305 1056 278 1040 315M1095 228L1158 265 1102 270 1163 290 1108 302 1180 320 1112 345 1125 383 1180 320M1176 208L1010 225M892 222L1010 225 940 170 893 200M975 243L1010 200 1056 278" />
        </g>
        <g stroke="#3ad03a">
          <path d="M96 44L207 91 290 162 378 89 485 47 498 120 524 192 540 268 513 298 530 305 542 328 535 355 515 380 495 400 515 405 500 440 480 497 410 515 367 545 345 520 290 488 235 520 212 543 170 512 98 497 85 440 68 410 88 398 70 378 45 345 38 325 50 303 70 297 43 268 58 190 82 122z" />
          <path d="M212 302l12-9 22-2 10 7-14 9-22 4z" fill="#a9d8a9" />
          <path d="M326 292l28-1 16 10-8 9-22-2z" fill="#4fae4f" />
          <path d="M254 408l30-9 34 3 10 5-30 6z" fill="#4fae4f" />
          <path d="M788 38L860 62 890 68 922 68 972 38 1040 93 1108 150 1176 208 1158 265 1163 290 1200 385 1112 345 1105 305 1010 322 985 270 968 243 892 222 893 130 808 122z" />
          <path d="M1112 345L1125 383 1210 386" />
        </g>
      </g>

      <path d="M605 368L645 383 780 447 885 497M634 370L780 441 947 521" stroke="#fff" />
      <path d="M620 366L634 367 780 429 980 511M620 366L780 438 945 521" stroke="#3ad03a" />

      <g transform="translate(780 240) scale(.3333)" strokeWidth="2.600">
        <path
          stroke="#fff"
          d="M228 152L455 100 382 173 228 152 343 235 382 173 605 178 490 228 382 173M343 235L490 228 425 275 343 235 258 322M343 235L322 338 425 275 555 315 490 228 682 280 555 315 688 392 570 405 555 315M425 275L475 345 555 315M425 275L365 362 475 345 380 403 365 362 350 425 380 403 472 425 475 345 570 405 472 425 343 516 380 403 320 512 350 425 310 410V437L350 425 318 455 320 512M310 437L318 512 218 580 343 516 225 550M343 516L472 425 435 508 343 516 360 610 435 508 570 405 540 500 435 508 460 603 360 610 250 610 343 516M540 500L688 392M540 500H662M540 500L583 600 460 603 540 500M460 603L515 683 413 690 460 603 320 706 360 610 195 705 320 706 413 690 505 715 400 737 413 690M320 706V787L400 737 395 775 505 715M175 767L310 752 400 737M168 806L310 752 395 775 500 745 502 845 395 775 410 852 320 787 270 865M168 806L320 787 395 775 502 845 600 813M195 705L310 752 502 845M300 485L320 512M365 362L362 455 320 512"
        />
        <path stroke="#3ad03a" d="M515 685L500 745 600 813M502 845L410 852 270 867 168 806 190 700 250 612 202 563 300 485 312 455 285 398 310 410 362 365 320 338 258 322 222 66 460 100 605 178 685 282 692 390 662 500 585 600 515 685" />
      </g>

      <g stroke="#3ad03a">
        <path d="M342 542L997 575 984 589 950 588M342 542L347 552 952 588M997 575L970 582M400 545L700 569" />
        <path d="M352 584L955 635M352 586L720 613 955 633" strokeWidth="1.300" />
      </g>
      <path d="M345 542L440 548 620 564 953 588" stroke="#fff" />

      <g strokeWidth=".8">
        <path d={fan(214.500, 304.500, 4, 4, 0.3, 7) + fan(214.500, 318.500, 4, 4, 0.3, 7)} stroke="#fff" />
        <circle cx="214.500" cy="304.500" r="5" stroke="#3ad03a" />
        <circle cx="214.500" cy="318.500" r="5" stroke="#3ad03a" />
        <path d="M41 368l6 4-7 3 5 5-5 4 6 3-6 4 5 4-6 2 4 5 5 3M39 378l7 8-6 12 7 6M41 368l2 38" stroke="#fff" />
        <path d="M41 367L49 370 44 377 47 387 44 396 50 406 42 408 37 398 39 387 37 377z" stroke="#3ad03a" />
      </g>
    </svg>
  );
}

function UvPanel() {
  return (
    <aside className="w-[134px] shrink-0 overflow-hidden border-l border-[#1c1c1c] bg-[#444]">
      <div className="w-[150px] pl-[1px] h-full flex flex-col">
        <div className="h-[86px] border-b border-l border-[#222] flex items-end gap-[2px] pl-9 pb-[6px] mb-[6px] shrink-0">
          <Ic n="relaxH" s={18} /><Ic n="flip" s={16} /><Sep /><Ic n="half" s={18} />
        </div>
        <Rollout title="Reshape Elements" body="h-[37px] flex items-center justify-center gap-[3px] pr-[10px]">
          <Ic n="straighten" /><Ic n="relaxBolt" /><Ic n="relax" />
        </Rollout>
        <Rollout title="Stitch" body="h-[36px] flex items-center gap-[4px] pl-4">
          <Ic n="stitchA" /><Ic n="stitchB" /><Ic n="stitchC" /><Ic n="stitchD" />
        </Rollout>
        <Rollout title="Explode" body="h-[85px] pt-[9px]">
          <div className="flex gap-[3px] pl-[5px]">
            <Ic n="breakI" /><Ic n="flatA" /><Ic n="flatB" /><Ic n="flatC" /><Ic n="flatD" />
          </div>
          <Group title="Weld" className="ml-[3px] h-[50px] mt-[3px]">
            <div className="flex items-center gap-1 pl-[6px] h-9">
              <Ic n="target" /><Ic n="weld" />
              <div className="ml-5 self-start">
                <div className="mb-1">Threshold:</div>
                <Spin label="Threshold" value="0,01" />
              </div>
            </div>
          </Group>
        </Rollout>
        <Rollout title="Peel" body="h-[116px] pt-2">
          <div className="ml-2 h-[58px] border border-r-0 border-[#262626] pt-1">
            <label className="flex items-center gap-3 pl-[25px] h-5"><Check on mark="#111" />Detach</label>
            <div className="flex gap-1 pl-[19px] mt-[4px]"><Ic n="peel" /><Ic n="peelMode" /><Ic n="reset" /></div>
          </div>
          <Group title="Pins:" className="ml-2 h-[50px]">
            <div className="flex items-center gap-[3px] pl-[8px] pt-2">
              <Ic n="pin" s={18} /><Ic n="unpin" s={18} /><Tool n="autoPin" on className="w-[22px] h-[22px]" /><Sep /><Ic n="pinSel" s={18} />
            </div>
          </Group>
        </Rollout>
        <Rollout title="Arrange Elements" body="h-[95px] pt-[5px] flex">
          <div className="w-[35px] flex flex-col gap-[14px] pt-[18px] pl-[3px] shrink-0">
            <Ic n="packA" /><Ic n="packB" />
          </div>
          <div className="flex-1 h-[87px] border border-[#262626] flex pt-2 gap-[14px] pl-[6px]">
            <div className="flex flex-col gap-[14px] pt-[9px]"><Ic n="packC" /><Ic n="packD" /></div>
            <div className="flex flex-col">
              <label className="flex items-center gap-[9px] h-[14px]"><Check on />Rescale</label>
              <label className="flex items-center gap-[9px] h-[14px] mt-2"><Check />Rotate</label>
              <span className="mt-[6px] mb-1">Padding:</span>
              <Spin label="Padding" value="0,02" w="w-[30px]" />
            </div>
          </div>
        </Rollout>
        <Rollout title="Element Properties" body="h-[60px] pt-[6px]">
          <div className="flex items-center gap-[14px] pl-[6px]">Rescale Priority:<Spin label="Rescale Priority" /></div>
        </Rollout>
      </div>
    </aside>
  );
}

function UvEditor() {
  return (
    <div className="absolute left-px right-[110px] top-5 bottom-[41px] bg-[#ebebeb] flex flex-col px-[7px] pb-[8px] shadow-[0_0_0_1px_#555] z-10">
      <header className="h-[31px] shrink-0 flex items-start justify-between">
        <svg viewBox="0 0 16 16" className="size-4 ml-[2px] mt-2" aria-hidden="true">
          <rect width="16" height="16" fill="#7fc4c4" /><path d="M4 1l8 4-1 4-6 2 1-4z" fill="#0d4f55" /><path d="M3 12h10v2H3z" fill="#dff" />
        </svg>
        <h2 className="font-['Noto_Sans'] text-[15px] leading-[30px] text-[#333] pl-[86px]">Edit UVWs</h2>
        <div className="flex">
          <button aria-label="Minimize" className="w-7 h-[22px] flex items-end justify-center pb-[6px]"><span className="w-[11px] h-[2px] bg-[#222]" /></button>
          <button aria-label="Maximize" className="w-7 h-[22px] flex items-center justify-center"><span className="w-[13px] h-[10px] border border-t-[3px] border-[#222]" /></button>
          <button aria-label="Close" className="w-[48px] h-[22px] bg-[#bcbcbc] text-white flex items-center justify-center">
            <svg viewBox="0 0 10 10" className="size-[9px]"><path d="M1 1l8 8M9 1L1 9" stroke="#fff" strokeWidth="2" /></svg>
          </button>
        </div>
      </header>

      <nav className="h-[21px] shrink-0 bg-[#f5f6f8] flex items-center gap-3 px-[6px] font-['Noto_Sans'] text-[12px] text-[#666]">
        {uvMenu.map((m) => <button key={m}>{m}</button>)}
      </nav>

      <div className="h-[25px] shrink-0 bg-[#444] border-b border-[#777] flex items-center justify-between">
        <div className="flex items-center">
          <Tool n="move" /><Tool n="rotate" /><Tool n="scaleLight" s={18} /><Tool n="freeform" s={18} on className="w-[22px] h-[21px]" /><Sep className="w-[10px]" /><Tool n="mirror" />
        </div>
        <div className="flex items-center pr-[14px]">
          <Tool n="checker" s={16} on className="w-[21px] h-[21px] mr-[5px]" />
          <button className="font-['Noto_Sans'] text-[13px] text-[#bbb] w-6 text-left">UV</button>
          <Tool n="list" s={14} className="w-[14px] h-5 mr-1" />
          <div className="relative">
            <Select label="Texture" options={['CheckerPattern  ( Checker )']} className="w-[140px] bg-[#c9e2fb] border border-[#222] text-black whitespace-pre" h="h-4" />
            <ul role="listbox" className="absolute top-full left-0 w-[188px] border border-[#5b82ad] bg-[#535353] text-[#ddd] z-20">
              {textures.map((t, i) => (
                <li key={i} role="option" aria-selected={i === 2} className={`h-3 px-[1px] leading-3 whitespace-pre ${i === 2 ? 'bg-[#3797fb] text-white' : ''}`}>{t}</li>
              ))}
            </ul>
          </div>
        </div>
      </div>

      <div className="flex-1 min-h-0 flex bg-[#3b3b3b] border-l border-black">
        <div className="flex-1 min-w-0"><UvCanvas /></div>
        <UvPanel />
      </div>

      <div className="h-[26px] shrink-0 bg-[#444] border-t border-[#666] flex items-center justify-between">
        <div className="flex items-center pl-[2px]">
          <Tool n="verts" /><Tool n="edges" /><Tool n="face" on className="w-[22px] h-[21px]" /><Sep /><Tool n="element" /><Sep />
          {['grow', 'shrink', 'loopG', 'loopPlus', 'loopMinus', 'ringG', 'ringPlus', 'ringMinus', 'brush', 'brushPlus', 'brushMinus'].map((n) => <Tool key={n} n={n} className="w-[23px] h-[22px]" />)}
        </div>
        <div className="flex items-center h-full border-l border-[#666] pr-2">
          <Tool n="soft" /><span className="w-[2px]" />
          <Spin label="Falloff" value="0,0" w="w-[30px]" />
          <Tool n="line" s={18} className="w-8 h-5" />
          <button className="font-['Noto_Sans'] text-[13px] text-[#ddd]">XY</button>
          <Sep className="w-[12px]" />
          <Tool n="limit" s={18} on className="w-[22px] h-[22px] mr-1" />
          <Spin label="Limit" value="16" w="w-[18px]" />
        </div>
      </div>
      <div className="h-[26px] shrink-0 bg-[#444] border-t border-[#666] flex items-center justify-between">
        <div className="flex items-center gap-[3px] pl-1">
          <Ic n="absolute" s={18} /><Sep />
          <span className="w-3">U:</span><Spin label="U" /><span className="w-[14px] pl-[2px]">V:</span><Spin label="V" /><span className="w-[14px] pl-[2px]">W:</span><Spin label="W" value="0,0" /><Sep className="w-3" />
        </div>
        <div className="flex items-center h-full border-l border-[#666]">
          <Tool n="lock" s={18} /><Tool n="filter" s={18} /><Sep /><Tool n="bulb" s={18} /><Tool n="snow" s={18} /><Sep />
          <Select label="Material IDs" options={['All IDs']} className="w-[115px] bg-[#f0f0f0] border border-[#222] text-black mr-[2px]" />
          {['hand', 'zoom', 'zoomRegion', 'zoomExt', 'magnet'].map((n) => <Tool key={n} n={n} s={18} className="w-[23px] h-[22px]" />)}
          <span className="w-[2px]" />
        </div>
      </div>
    </div>
  );
}

function MainToolbar() {
  const T = ({ n, on }: { n: string; on?: boolean }) => <Tool n={n} on={on} className="w-[27px] h-[24px]" />;
  const S = () => <span className="w-px h-5 mx-[2px] bg-[#222] self-center" />;
  return (
    <div className="h-[33px] shrink-0 flex items-start pt-[3px]">
      <div className="flex items-start border-r border-[#222] h-full pl-[2px] pr-[4px]">
        <span className="w-[3px] h-5 border-x border-[#222]" />
        <T n="link" /><T n="unlink" /><T n="waves" /><S />
        <Select label="Selection filter" options={['All']} className="w-[57px] bg-[#e4e4e4] border border-[#222] text-black" />
        <Tool n="selectObj" on className="w-6 h-6 ml-[2px]" /><T n="byName" /><T n="rect" /><T n="windowSel" /><S />
        <T n="moveBig" /><T n="rotate" /><T n="scaleBig" />
        <Select label="Coordinate system" options={['View']} className="w-[57px] bg-[#e4e4e4] border border-[#222] text-black" />
        <T n="pivot" /><S /><T n="manip" /><T n="keyboard" /><S />
        <button className="w-[27px] h-5 flex items-center justify-center font-['Noto_Sans'] text-[14px] text-[#ddd]">3<span className="size-[7px] mt-3 rounded-full border-2 border-[#e23b3b]" /></button>
        <T n="snapAngle" />
        <button className="w-[27px] h-5 flex items-center justify-center font-['Noto_Sans'] text-[13px] text-[#ddd]">%<span className="size-[7px] mt-3 rounded-full border-2 border-[#e23b3b]" /></button>
        <T n="spinSnap" /><S /><T n="sets" />
        <span className="relative flex ml-px">
          <input aria-label="Selection set" defaultValue="Create Selection Se" className="w-[98px] h-[17px] pl-[3px] bg-[#5a5a5a] border border-[#ccc] text-[#111]" />
          <span className="absolute right-0 top-0 h-[17px] w-[18px] bg-white flex items-center justify-center">
            <svg viewBox="0 0 10 10" className="size-[9px]"><path d="M1 3l4 4 4-4" fill="none" stroke="#444" strokeWidth="2" /></svg>
          </span>
        </span>
        <S /><T n="mirrorBig" /><T n="align" /><S /><T n="layers" /><S /><T n="ribbon" /><T n="curveEd" /><T n="schematic" /><S /><T n="material" /><S /><T n="renderSetup" /><T n="renderFrame" /><T n="render" />
      </div>
    </div>
  );
}

function Viewport() {
  return (
    <div className="flex-1 min-h-0 flex justify-end border-t-2 border-r-2 border-b-2 border-[#6a5f2c] bg-[linear-gradient(#1e1e1e,#262626_30%,#4a4a4a_80%)]">
      <svg viewBox="1290 82 109 735" className="w-[109px] h-full" fill="none" aria-label="Perspective viewport">
        <path d="M1290 127L1399 112M1290 129L1399 138M1290 190L1399 199M1290 216L1399 199M1290 250L1399 257M1290 303L1399 288M1290 345L1399 317M1290 372L1399 377M1290 460L1399 424M1290 440L1399 463M1290 560L1399 520M1290 540L1399 582M1290 690L1399 640" stroke="#555" strokeWidth=".8" />
        <ellipse cx="1355" cy="141" rx="29" ry="5" stroke="#777" strokeWidth="3" />
        <path d="M1338 114h17v26l-16-4z" fill="#8c8f94" />
        <path d="M1355 114h16l-1 21-15 5z" fill="#7b7e83" />
        <text x="1342" y="129" fontSize="6" fill="#555">LEFT</text>
        <text x="1358" y="129" fontSize="6" fill="#555">BOT</text>
      </svg>
    </div>
  );
}

function Timeline() {
  return (
    <div className="h-[39px] shrink-0 flex bg-[#444]">
      <div className="w-[42px] bg-[#3f82d4] shrink-0 px-[6px] pb-[10px]"><div className="h-full bg-[#66727f] border border-[#333]" /></div>
      <div className="flex-1 flex flex-col pt-px">
        <div className="h-4 flex items-center text-[#ddd]">
          <button className="w-[14px] h-full border border-[#2a2a2a]">&lt;</button>
          <div className="w-[103px] h-full border border-[#1e1e1e] text-center leading-[14px]">0 / 100</div>
          <button className="w-[14px] h-full border border-[#2a2a2a]">&gt;</button>
        </div>
        <div className="flex-1 flex">
          <button aria-label="Track bar" className="w-[42px] flex items-center justify-center pr-[6px]"><Ic n="trackToggle" s={16} /></button>
          <div className="flex-1 mr-[41px] pl-1 pr-[6px] bg-[#2b2b2b] border-t border-black flex justify-between">
            {Array.from({ length: 101 }, (_, i) => (
              <div key={i} className="w-0 flex flex-col items-center">
                {i === 0
                  ? <span className="w-[6px] h-[20px] bg-[#8b831f] border border-[#b5aa30] shrink-0" />
                  : <span className="w-px h-[10px] bg-[#666] shrink-0" />}
                {i % 5 === 0 && <span className={`text-[#ccc] leading-[11px] ${i === 0 ? '-mt-[10px]' : ''}`}>{i}</span>}
              </div>
            ))}
          </div>
        </div>
      </div>
    </div>
  );
}

function CommandPanel() {
  const tabs = ['sun', 'modify', 'hierarchy', 'motion', 'display', 'hammer'];
  const mods = ['Unwrap UVW', 'Skin', 'Editable Mesh'];
  const btn = 'border border-[#555] border-r-[#222] border-b-[#222] text-[#bbb]';
  return (
    <aside className="w-[198px] shrink-0 flex flex-col pt-[34px] bg-[#444]">
      <div className="flex pl-[2px] border-b border-[#222] shrink-0">
        {tabs.map((t) => <Tool key={t} n={t} s={16} className={`w-6 h-5 border-t border-x border-[#222] rounded-t-sm ${t === 'modify' ? 'bg-[#4c4c4c]' : 'bg-[#3a3a3a]'}`} />)}
      </div>
      <div className="flex gap-1 pl-[11px] pr-[5px] mt-[6px] shrink-0">
        <input aria-label="Object name" defaultValue="body__LOD1" className="flex-1 min-w-0 h-5 px-[2px] pb-[4px] bg-[#555] border-2 border-[#222] border-r-[#4d4d4d] border-b-[#4d4d4d] text-[#ddd]" />
        <button aria-label="Object color" className="w-4 h-5 bg-[#e6e6e6]" />
      </div>
      <span className="relative flex ml-[11px] mr-[5px] mt-[6px] shrink-0">
        <select aria-label="Modifier List" className="appearance-none w-full h-[21px] px-[2px] bg-[#555] border-2 border-[#222] text-[#ddd]"><option>Modifier List</option></select>
        <span className="absolute right-0 top-px h-[19px] w-[17px] bg-white flex items-center justify-center pointer-events-none">
          <svg viewBox="0 0 10 10" className="size-[9px]"><path d="M1 3l4 4 4-4" fill="none" stroke="#444" strokeWidth="2" /></svg>
        </span>
      </span>
      <ul className="ml-[11px] mr-[8px] mt-[5px] h-[105px] shrink-0 border-2 border-[#ccc] bg-[#535353] text-[#ddd]">
        {mods.map((m, i) => (
          <li key={m} className={`h-[13px] flex items-center border-b border-[#666] pl-1 ${i === 0 ? 'bg-[#3c7fd8]' : ''}`}>
            {i < 2 && <svg viewBox="0 0 10 12" className="w-[9px] h-[12px] mr-[7px]"><circle cx="5" cy="4" r="3.500" fill="#fff" stroke="#222" /><path d="M4 7h2v5H4z" fill="#fff" stroke="#222" strokeWidth=".5" /><path d="M4 4h2v2H4z" fill="#222" /></svg>}
            <span className="size-2 bg-black text-white flex items-center justify-center text-[8px] leading-none">+</span>
            <span className={`flex-1 ${i < 2 ? 'pl-[6px]' : 'pl-[5px]'}`}>{m}</span>
            <svg viewBox="0 0 12 12" className="size-3 mr-1"><path d="M0 6h2v2H0zM5 9h2v2H5zM9 0h2v2H9z" fill="#111" /></svg>
          </li>
        ))}
      </ul>
      <div className="h-[37px] shrink-0 flex items-center gap-[5px] pl-3 pb-2">
        <Ic n="pushpin" s={16} /><Bar /><Ic n="tube" s={14} /><Bar /><Ic n="unique" s={16} /><Ic n="trash" s={14} /><Bar /><Ic n="config" s={14} />
      </div>
      <div className="border-t-2 border-[#111] ml-1 mr-1 h-[7px] shrink-0" />
      <div className="flex-1 min-h-0 flex overflow-hidden border-t border-[#222] pl-[5px] pt-1">
        <div className="w-[183px] flex flex-col">
          <Rollout title="Selection" body="h-[184px] px-[2px] pt-[10px]">
            <div className="flex items-center pl-2 mb-[6px]">
              <Tool n="verts" /><Tool n="edges" /><Tool n="face" on className="w-[22px] h-[22px]" /><span className="w-6" /><Tool n="element" />
            </div>
            <Group title="Modify Selection:" className="h-[53px]">
              <div className="flex items-center pl-2 pt-[11px] gap-[3px]"><Ic n="grow" /><Ic n="shrink" /><span className="w-6" /><Ic n="loopGray" /><Ic n="ringGray" /></div>
            </Group>
            <Group title="Select By:" className="h-[86px] mt-1">
              <div className="flex items-center pl-1 pt-[9px]">
                <Tool n="ignore" on className="w-[22px] h-[22px]" /><span className="w-1" /><Ic n="pointEdge" s={18} /><span className="w-4" /><Ic n="angle" /><span className="w-[2px]" />
                <span className="self-start"><Spin label="Planar angle" value="0,0" w="w-[25px]" /></span>
              </div>
              <div className="flex items-center pl-1 pt-[11px] gap-[3px]">
                <Ic n="matSel" /><span className="self-start"><Spin label="Material ID" value="0" /></span><span className="w-[2px]" /><Ic n="gridSel" /><span className="self-start"><Spin label="Smoothing group" value="0" w="w-[22px]" /></span>
              </div>
            </Group>
          </Rollout>
          <Rollout title="Edit UVs" body="h-[120px] pt-[5px] flex flex-col items-center">
            <button className={`${btn} w-[157px] h-[27px]`}>Open UV Editor ...</button>
            <button className={`${btn} w-[157px] h-[27px] mt-[5px]`}>Tweak In View</button>
            <div className="flex items-center gap-[3px] mt-[13px] mr-9"><Ic n="mapBolt" /><Tool n="mapBulb" on className="w-[22px] h-[22px]" /><Ic n="mapFlat" /></div>
          </Rollout>
          <Rollout title="Channel" body="h-[134px] pt-[2px] pl-[2px] pr-[8px]">
            <div className="grid grid-cols-2 gap-x-[3px] gap-y-[2px]">
              <button className={`${btn} h-[23px]`}>Reset UVWs</button>
              <button className={`${btn} h-[23px]`}>Save...</button>
              <span />
              <button className={`${btn} h-[23px]`}>Load...</button>
            </div>
            <Group title="Channel:" className="h-[67px]">
              <div className="flex items-center justify-between pl-2 pr-[13px] pt-[9px]">
                <label className="flex items-center gap-[6px]"><input type="radio" name="channel" defaultChecked className="appearance-none size-2 rounded-full bg-[#ddd] border border-[#222]" />Map Channel:</label>
                <Spin label="Map channel" value="1" w="w-9" />
              </div>
              <label className="flex items-center gap-[6px] pl-2 pt-[9px]"><input type="radio" name="channel" className="appearance-none size-2 rounded-full bg-[#555] border border-[#222]" />Vertex Color Channel</label>
            </Group>
          </Rollout>
          <Rollout title="Peel" body="h-[40px] flex items-start pl-5 pt-[11px] gap-[4px]">
            <Ic n="peel" /><Ic n="peelMode" /><Ic n="reset" /><Ic n="goldBox" />
          </Rollout>
        </div>
        <div className="w-1 ml-[2px] flex flex-col"><span className="h-1/2 bg-black" /><span className="flex-1 bg-[#c4c4c4]" /></div>
      </div>
      <div className="h-[6px] shrink-0 border-t border-b border-[#222]" />
    </aside>
  );
}

function StatusBar() {
  const box = 'border border-[#222] border-r-[#555] border-b-[#555] flex items-center px-1 text-[#ccc]';
  const b = 'border border-[#555] border-r-[#222] border-b-[#222] text-[#bbb]';
  return (
    <footer className="h-[42px] shrink-0 flex gap-1 bg-[#444] border-b-2 border-[#b5a266] pt-[3px]">
      <div className="w-[84px] shrink-0 flex flex-col gap-[2px] pl-[2px] pr-[2px]">
        <div className="h-[17px] bg-[#dcc5c5]" />
        <div className="h-[17px] bg-white text-black font-['Liberation_Mono'] text-[12px] leading-[17px] pl-1 overflow-hidden whitespace-nowrap">Welcome to</div>
      </div>
      <div className="flex-1 min-w-0 flex flex-col gap-[4px]">
        <div className="h-[17px] flex items-center gap-2">
          <div className={`${box} flex-1 h-full`}>1 Object Selected</div>
          <Ic n="probe" s={14} /><Ic n="lockW" s={14} /><Ic n="absolute" s={14} />
          {['X:', 'Y:', 'Z:'].map((a) => (
            <label key={a} className="flex items-center gap-[2px] text-[#bbb]">{a}<input className="w-[48px] h-[17px] bg-[#555] border-2 border-[#222] border-r-[#4d4d4d] border-b-[#4d4d4d]" /></label>
          ))}
          <span className="w-px" />
        </div>
        <div className="h-4 flex items-center gap-1">
          <div className={`${box} flex-1 h-full`}>Select texture vertices</div>
          <Tool n="isoCube" s={14} on className="w-[17px] h-4" />
        </div>
      </div>
      <div className="w-[83px] shrink-0 flex flex-col gap-[4px]">
        <div className={`${box} h-[17px]`}>Grid = 0,254m</div>
        <button className={`${box} h-4`}>Add Time Tag</button>
      </div>
      <button aria-label="Set keys" className={`${b} w-9 shrink-0 flex items-center justify-center`}><Ic n="key" /></button>
      <div className="w-[38px] shrink-0 flex flex-col gap-px">
        <button className={`${b} h-[18px]`}>Auto</button>
        <button className={`${b} h-[18px]`}>Set K.</button>
      </div>
      <div className="w-[96px] shrink-0 flex flex-col gap-[2px]">
        <Select label="Key filter set" options={['Selected']} className="bg-[#f0f0f0] border border-[#222] text-black" h="h-[15px]" />
        <div className="flex gap-1 h-[18px]"><Ic n="tangent" s={18} /><button className={`${b} flex-1`}>Filters...</button></div>
      </div>
      <div className="w-[184px] shrink-0 flex flex-col gap-[2px]">
        <div className="h-[18px] flex items-center justify-between pl-1 pr-[6px]">
          {['first', 'prev', 'play', 'next', 'last', 'zoom', 'zoomAll', 'extents', 'extentsAll'].map((n) => <Ic key={n} n={n} s={14} />)}
        </div>
        <div className="h-[17px] flex items-center justify-between pl-1 pr-[6px]">
          <Ic n="keyMode" s={14} />
          <Spin label="Current frame" value="0" w="w-[54px]" />
          {['timeCfg', 'region', 'hand', 'orbit', 'maximize'].map((n) => <Ic key={n} n={n} s={14} />)}
        </div>
      </div>
    </footer>
  );
}

export default function App() {
  return (
    <div className="relative h-screen overflow-hidden flex flex-col bg-[#444] text-[#ccc] font-['DejaVu_Sans_Condensed','DejaVu_Sans',sans-serif] text-[9px] leading-[11px]">
      <header className="h-[25px] shrink-0 flex items-stretch bg-[#eec66b] border-b border-[#5c5030]">
        <div className="w-[365px] shrink-0 bg-[#fffff2] flex items-center">
          <div className="w-[34px] shrink-0" />
          <div className="flex items-center gap-3 pl-2 text-[#f2eeb0]">
            <svg viewBox="0 0 168 18" className="w-[168px] h-[18px]" fill="none" stroke="#f7f3c0" strokeWidth="1.500">
              <path d="M1 2h11l4 4v9H1zM26 4h6l2 2h8v9H26zM53 2h13v14H53zM56 2v5h7V2M78 8l6-5v3h8v6M78 8l6 5V10M102 8l4 0M114 12V7h10V4l5 5-5 4v-3M139 8h4M152 2h10v10M156 5h10v11h-10z" />
            </svg>
          </div>
          <div className="flex-1 flex items-center border-l border-[#f3eda8] h-full pl-[7px] font-['Noto_Sans'] text-[12px] text-[#dcc878] whitespace-nowrap">Workspace: Default</div>
          <span className="w-[18px] text-[#d8b840] border-l border-[#f3eda8] h-full flex items-center justify-center"><svg viewBox="0 0 8 8" className="size-2"><path d="M0 0h8v1H0zM0 3h8L4 7z" fill="#d8b840" /></svg></span>
        </div>
        <h1 className="flex-1 text-center font-['Noto_Sans'] text-[15px] leading-[25px] text-[#111] whitespace-pre">Autodesk 3ds Max  2014 x64      stt-PRIMER.max</h1>
        <div className="w-[352px] shrink-0 bg-[#fffff2] flex items-center justify-between pl-1 pr-2">
          <svg viewBox="0 0 8 8" className="size-2"><path d="M1 0v8l4-4z" fill="#e6cf70" /></svg>
          <svg viewBox="0 0 144 20" className="w-[144px] h-5" fill="none" stroke="#f7f3c0" strokeWidth="1.500">
            <path d="M2 18V9l4-7 3 4 3-4 4 7v9h-5v-8H8v8zM27 4q5-4 7 1l7 11-8-7q-5 1-6-5zM56 6h8v6h-8zM54 17h12M83 2l3 6 6 1-5 4 2 6-6-3-6 3 2-6-5-4 6-1z" /><circle cx="120" cy="10" r="8" />
          </svg>
        </div>
        <div className="w-[128px] shrink-0 flex">
          <button aria-label="Minimize application" className="w-[42px] flex items-end justify-end pb-[9px] pr-[2px]"><span className="w-[12px] h-[2px] bg-[#222]" /></button>
          <button aria-label="Restore application" className="flex-1 flex items-center justify-center pl-[7px] pb-1">
            <svg viewBox="0 0 13 13" className="size-[13px]" fill="none" stroke="#222"><path d="M3 3V.5h9.500V9H10" /><path d="M.5 3.500H10V12H.5zM.5 5H10" /></svg>
          </button>
          <button aria-label="Close application" className="w-12 h-[21px] mr-[2px] bg-[#c75050] flex items-center justify-center">
            <svg viewBox="0 0 10 10" className="size-[9px]"><path d="M1 1l8 8M9 1L1 9" stroke="#fff" strokeWidth="2" /></svg>
          </button>
        </div>
      </header>
      <nav className="h-[22px] shrink-0 bg-linear-to-b from-[#a0a0a0] to-[#505050] flex items-center gap-[21px] pl-[46px] font-['Noto_Sans'] text-[12px] text-[#f2f2f2]">
        {mainMenu.map((m) => <button key={m}>{m}</button>)}
      </nav>

      <div className="flex-1 min-h-0 flex">
        <div className="relative flex-1 min-w-0 flex flex-col">
          <MainToolbar />
          <Viewport />
          <Timeline />
          <UvEditor />
        </div>
        <CommandPanel />
      </div>
      <StatusBar />

      <button aria-label="Application menu" className="absolute left-0 top-0 w-[34px] h-[34px] border border-[#222] bg-linear-to-b from-[#9a9a9a] to-[#6a6a6a] flex items-center justify-center">
        <svg viewBox="0 0 30 30" className="size-[30px]"><path d="M5 3l12 4 4 8-5 9-11 2 4-7-3-4 2-5z" fill="#0f6d70" /><path d="M5 3l12 4-7 4zM10 19l11-4-5 9z" fill="#1ba39c" /><path d="M24 14h5l-2.500 3z" fill="#222" /></svg>
      </button>

      <svg viewBox="0 0 1599 899" preserveAspectRatio="none" className="absolute inset-0 w-full h-full pointer-events-none z-30" fill="none" stroke="#cf2a30" strokeWidth="2.400" strokeLinecap="round" strokeLinejoin="round" aria-hidden="true">
        <path d="M991 221Q984 205 984 180L986 160 993 143 1002 132 1019 121 1043 107 1057 103 1070 97 1079 96 1101 87Q1110 84 1117 84H1141L1163 86 1187 88 1211 93 1232 98 1249 100 1268 104 1283 109 1304 120 1312 128 1320 143 1327 163 1330 182 1329 213 1328 233 1325 252Q1322 260 1318 262L1301 271 1280 274 1256 277H1112L1077 276 1060 272 1040 268 1020 258 1003 240 991 221" />
        <path d="M377 505L438 493 475 481 500 470 535 461 592 439 637 421 694 388 740 360 780 338 797 330 833 310 862 286 895 265 930 240 955 230 991 221" />
        <path d="M795 236L840 232 885 226 930 221 991 220M991 221L960 240 932 258 915 276 895 300 870 330 848 375" />
      </svg>
    </div>
  );
}
